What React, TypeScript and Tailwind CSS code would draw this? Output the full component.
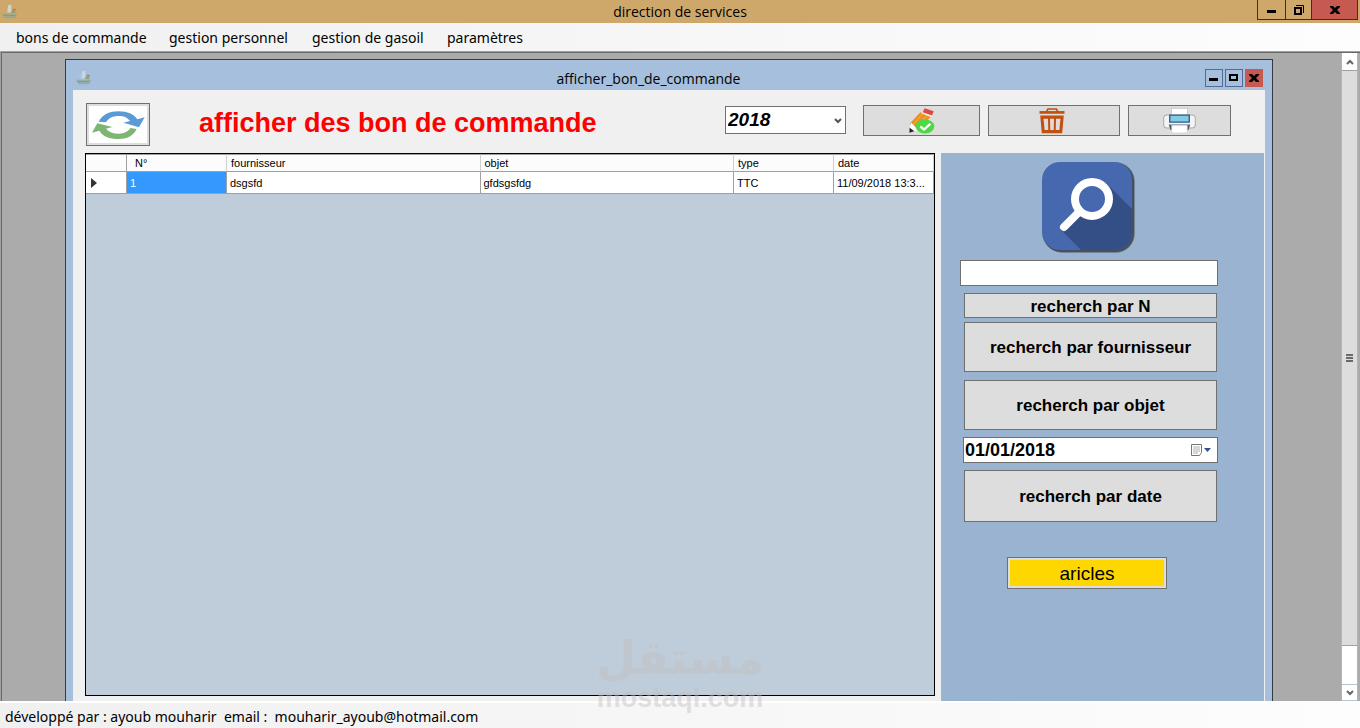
import type { ReactNode } from 'react';

const menuItems = [
  { label: 'bons de commande', width: 'w-[153px]' },
  { label: 'gestion personnel', width: 'w-[143px]' },
  { label: 'gestion de gasoil', width: 'w-[135px]' },
  { label: 'paramètres', width: 'w-[100px]' },
];

const headers = ['N°', 'fournisseur', 'objet', 'type', 'date'];

const rows = [
  { numero: '1', fournisseur: 'dsgsfd', objet: 'gfdsgsfdg', type: 'TTC', date: '11/09/2018 13:3...' },
];

const searchButton = 'ml-1 w-[253px] border border-[#707070] bg-[#dddddd] pt-0.5 text-[17px] leading-5 font-bold';

function BoatIcon() {
  return (
    <svg viewBox="0 0 48 44" className="h-[15px] w-4" aria-hidden="true">
      <path d="M0 29h46l-7 13H8z" fill="#8fa596" opacity="0.7" />
      <path d="M4 34h36" stroke="#5fa3c4" strokeWidth="3" />
      <path d="M18 3l10-2v24H16z" fill="#d3dbe2" opacity="0.8" />
      <path d="M32 14h9v5h-9z" fill="#cf6a4a" />
      <path d="M28 20h12v6H28z" fill="#7fa86a" />
    </svg>
  );
}

function RefreshIcon() {
  return (
    <svg viewBox="0 0 160 90" className="h-[30px] w-[54px]" aria-hidden="true">
      <path d="M22 35C34 12 56 4 82 4c26 0 46 8 56 24l22-6-17 30-47-14 20-5C108 22 96 18 82 18c-18 0-30 6-38 19z" fill="#5b9bd5" />
      <path d="M2 68l16-28 45 11-19 5c8 10 22 15 38 15s30-7 35-17l19 3c-10 21-30 30-54 30-28 0-48-8-58-25z" fill="#7db573" />
    </svg>
  );
}

function PencilIcon() {
  return (
    <svg viewBox="0 0 90 80" className="h-[27px] w-[30px]" aria-hidden="true">
      <path d="M40 15l32 13-38 42-26-20z" fill="#e8912b" />
      <path d="M47 20L18 54M60 25L28 62" stroke="#f5c518" strokeWidth="4" strokeDasharray="3 3" />
      <path d="M12 46l22 23L7 76z" fill="#fff" />
      <path d="M8 62l14 10-15 5z" fill="#222" />
      <path d="M47 12l29 12-3 6-30-12z" fill="#f0eeea" />
      <path d="M53 3l27 9-5 13-28-10z" fill="#d94a45" />
      <ellipse cx="54" cy="58" rx="28" ry="21" fill="#4cd944" />
      <path d="M40 58l11 9 19-17" fill="none" stroke="#fff" strokeWidth="7" />
    </svg>
  );
}

function TrashIcon() {
  return (
    <svg viewBox="0 0 76 80" className="mr-1 h-[27px] w-[26px]" aria-hidden="true">
      <path d="M22 14l4-8h25l4 8" fill="none" stroke="#c4500f" strokeWidth="5" />
      <path d="M1 12h74v8H1z" fill="#c4500f" />
      <path d="M8 30h60l-4 43H12z" fill="none" stroke="#c4500f" strokeWidth="9" />
      <path d="M29 30l1 43M47 30l-1 43" stroke="#c4500f" strokeWidth="6" />
    </svg>
  );
}

function PrinterIcon() {
  return (
    <svg viewBox="0 0 104 80" className="h-[27px] w-[35px]" aria-hidden="true">
      <path d="M28 4h48v22H28z" fill="#fff" stroke="#bbb" strokeWidth="2" />
      <rect x="5" y="24" width="94" height="38" rx="10" fill="#f4f4f4" stroke="#aaa" strokeWidth="3" />
      <path d="M20 52h64l-5 16H25z" fill="#53606a" />
      <path d="M29 54h46v23H29z" fill="#fff" stroke="#ccc" strokeWidth="2" />
      <path d="M23 24h58v21H23z" fill="#83cbe0" stroke="#2b5b94" strokeWidth="4" />
    </svg>
  );
}

function SearchLogo() {
  return (
    <svg viewBox="0 0 96 94" className="h-[94px] w-24" aria-hidden="true">
      <defs>
        <clipPath id="tile">
          <rect x="2" y="2" width="90" height="88" rx="18" />
        </clipPath>
      </defs>
      <rect x="4" y="2" width="91" height="91" rx="20" fill="#71849c" />
      <rect x="3" y="3" width="91" height="89" rx="18" fill="#47505e" />
      <g clipPath="url(#tile)">
        <path d="M0 0h96v94H0z" fill="#4668ae" />
        <path d="M66 23l40 40v40H54L21 70z" fill="#344f86" />
      </g>
      <circle cx="52" cy="39" r="17" fill="#4668ae" stroke="#fff" strokeWidth="8" />
      <path d="M38 53L24 67" stroke="#fff" strokeWidth="8" strokeLinecap="round" />
    </svg>
  );
}

function MinimizeGlyph() {
  return (
    <svg viewBox="0 0 12 12" className="size-3" aria-hidden="true">
      <path d="M1 6h9v3H1z" />
    </svg>
  );
}

function CloseGlyph() {
  return (
    <svg viewBox="0 0 12 12" className="size-3" aria-hidden="true">
      <path d="M1 2h3l2 2 2-2h3v1L8 6l3 3v1H8L6 8l-2 2H1V9l3-3-3-3z" />
    </svg>
  );
}

function ToolButton({ label, className, children }: { label: string; className: string; children: ReactNode }) {
  return (
    <button
      type="button"
      aria-label={ label }
      className={ `flex h-[31px] items-center justify-center border bg-[#dddddd] ${className}` }
    >
      { children }
    </button>
  );
}

function TitleBar() {
  return (
    <header className="grid h-[23px] shrink-0 grid-cols-[1fr_auto_1fr] bg-[#cea86a]">
      <div className="pt-1 pl-0.5">
        <BoatIcon />
      </div>
      <h1 className="pt-0.5 text-[14px] leading-5">direction de services</h1>
      <div className="flex h-5 justify-end pr-0.5">
        <button type="button" aria-label="Réduire" className="flex w-[29px] items-center justify-center border border-t-0 border-[#40301c]">
          <MinimizeGlyph />
        </button>
        <button type="button" aria-label="Restaurer" className="flex w-[25px] items-center justify-center border-b border-[#40301c]">
          <svg viewBox="0 0 12 12" className="size-3" aria-hidden="true">
            <path d="M2 4h6v6H2z" fill="none" stroke="#000" strokeWidth="2" />
            <path d="M3 1.500h7.500V9" fill="none" stroke="#000" />
          </svg>
        </button>
        <button type="button" aria-label="Fermer" className="flex w-[47px] items-center justify-center border border-t-0 border-[#40301c] bg-[#c75a50]">
          <CloseGlyph />
        </button>
      </div>
    </header>
  );
}

function ChildTitleBar() {
  return (
    <div className="flex h-[30px] shrink-0 px-0.5">
      <div className="pt-2.5 pl-2">
        <BoatIcon />
      </div>
      <h2 className="flex-1 pt-[9px] text-center text-[14px] leading-5">afficher_bon_de_commande</h2>
      <div className="flex gap-0.5 pt-[9px] pr-[7px]">
        <button type="button" aria-label="Réduire" className="flex size-[18px] items-center justify-center border border-[#536a94]">
          <MinimizeGlyph />
        </button>
        <button type="button" aria-label="Agrandir" className="flex size-[18px] items-center justify-center border border-[#536a94]">
          <svg viewBox="0 0 12 12" className="size-3" aria-hidden="true">
            <path d="M2 3h7v5H2z" fill="none" stroke="#000" strokeWidth="2" />
          </svg>
        </button>
        <button type="button" aria-label="Fermer" className="flex size-[18px] items-center justify-center bg-[#c75a50]">
          <CloseGlyph />
        </button>
      </div>
    </div>
  );
}

function Toolbar() {
  return (
    <div className="flex h-[63px] shrink-0 items-start pt-[15px] pr-[34px] pl-[13px]">
      <button
        type="button"
        aria-label="Actualiser"
        className="-mt-0.5 flex h-[43px] w-16 items-center justify-center border border-[#707070] bg-white ring-2 ring-[#dddddd] ring-inset"
      >
        <RefreshIcon />
      </button>
      <p className="ml-[49px] flex-1 text-[27px] leading-9 font-bold text-[#ff0000]">
        afficher des bon de commande
      </p>
      <div className="relative mr-[17px] mt-px">
        <select
          aria-label="Année"
          className="h-7 w-[121px] appearance-none border border-[#707070] bg-white pl-0.5 text-[19px] leading-6 font-bold italic"
        >
          <option>2018</option>
        </select>
        <svg viewBox="0 0 8 6" className="pointer-events-none absolute top-3 right-1 h-1.5 w-2" aria-hidden="true">
          <path d="M1 1l3 3 3-3" fill="none" stroke="#555" strokeWidth="2" />
        </svg>
      </div>
      <div className="flex gap-2">
        <ToolButton label="Modifier" className="w-[117px] border-[#707070]">
          <PencilIcon />
        </ToolButton>
        <ToolButton label="Supprimer" className="w-[132px] border-[#707070]">
          <TrashIcon />
        </ToolButton>
        <ToolButton label="Imprimer" className="w-[103px] border-[#707070]">
          <PrinterIcon />
        </ToolButton>
      </div>
    </div>
  );
}

function OrdersTable() {
  return (
    <div className="mb-[5px] ml-3 flex-1 border border-black bg-[#bfccd9] font-['Liberation_Sans',Arial,sans-serif] text-[11px] leading-4">
      <table className="w-full table-fixed border-separate border-spacing-0 text-left">
        <colgroup>
          <col className="w-[41px]" />
          <col className="w-[100px]" />
          <col />
          <col />
          <col className="w-[100px]" />
          <col className="w-[100px]" />
        </colgroup>
        <thead>
          <tr className="h-[18px] bg-[#fcfcfc]">
            <td className="border-t border-r border-b border-[#a0a0a0] p-0" />
            { headers.map((header, i) => (
              <th
                key={ header }
                scope="col"
                className={ `border-t border-r border-b border-t-[#a0a0a0] border-r-[#d0d0d0] border-b-[#a0a0a0] py-0 pr-0 font-normal ${i === 0 ? 'pl-2' : 'pl-1'}` }
              >
                { header }
              </th>
            )) }
          </tr>
        </thead>
        <tbody>
          { rows.map((row) => (
            <tr key={ row.numero } className="h-[22px] bg-white">
              <td className="border-r border-b border-[#a0a0a0] py-0 pr-0 pl-[5px]">
                <svg viewBox="0 0 6 10" className="h-2.5 w-1.5" aria-hidden="true">
                  <path d="M0 0l6 5-6 5z" fill="#333" />
                </svg>
              </td>
              <td className="border-r border-b border-[#a0a0a0] bg-[#3399ff] py-0 pr-0 pl-[3px] text-white">{ row.numero }</td>
              <td className="border-r border-b border-[#a0a0a0] py-0 pr-0 pl-[3px]">{ row.fournisseur }</td>
              <td className="border-r border-b border-[#a0a0a0] py-0 pr-0 pl-[3px]">{ row.objet }</td>
              <td className="border-r border-b border-[#a0a0a0] py-0 pr-0 pl-[3px]">{ row.type }</td>
              <td className="border-r border-b border-[#a0a0a0] py-0 pr-0 pl-[3px] whitespace-nowrap">{ row.date }</td>
            </tr>
          )) }
        </tbody>
      </table>
    </div>
  );
}

function SearchPanel() {
  return (
    <aside className="mr-px ml-1.5 flex w-[323px] shrink-0 flex-col items-start bg-[#99b3d1] pt-[7px] pl-[19px] font-['Liberation_Sans',Arial,sans-serif]">
      <div className="ml-20">
        <SearchLogo />
      </div>
      <input type="text" aria-label="Recherche" className="mt-1.5 h-[26px] w-[258px] border border-[#707070] bg-white px-1" />
      <button type="button" className={ `${searchButton} mt-[7px] h-[25px]` }>recherch par N</button>
      <button type="button" className={ `${searchButton} mt-1 h-[50px]` }>recherch par fournisseur</button>
      <button type="button" className={ `${searchButton} mt-2 h-[50px]` }>recherch par objet</button>
      <div className="mt-[7px] ml-[3px] flex h-[26px] w-[255px] items-center border border-[#707070] bg-white pr-1.5">
        <input
          type="text"
          aria-label="Date"
          defaultValue="01/01/2018"
          className="min-w-0 flex-1 pl-px text-[18px] leading-5 font-bold"
        />
        <button type="button" aria-label="Ouvrir le calendrier">
          <svg viewBox="0 0 20 12" className="h-3 w-5" aria-hidden="true">
            <path d="M.5.5h10v8l-2 3h-8z" fill="#fff" stroke="#777" />
            <path d="M2 3h7M2 5h7M2 7h7M2 9h5" stroke="#aab0b8" />
            <path d="M13 4h7l-3.500 4z" fill="#34508c" />
          </svg>
        </button>
      </div>
      <button type="button" className={ `${searchButton} mt-[7px] h-[52px]` }>recherch par date</button>
      <button
        type="button"
        className="mt-[35px] ml-[47px] h-8 w-40 border border-[#707070] bg-[#ffd700] pt-0.5 text-[19px] leading-6 ring-2 ring-[#dddddd] ring-inset"
      >
        aricles
      </button>
    </aside>
  );
}

function Scrollbar() {
  return (
    <div className="mr-0.5 flex w-[17px] shrink-0 flex-col border-x border-[#b4b4b4] bg-white">
      <div className="flex h-[17px] items-center justify-center">
        <svg viewBox="0 0 8 6" className="h-1.5 w-2" aria-hidden="true">
          <path d="M1 5l3-3 3 3" fill="none" stroke="#666" strokeWidth="2" />
        </svg>
      </div>
      <div className="flex flex-[576] flex-col items-center justify-center gap-px border-y border-[#a0a0a0] bg-[#dddddd]">
        <span className="h-0.5 w-[7px] bg-[#6a6a6a]" />
        <span className="h-0.5 w-[7px] bg-[#6a6a6a]" />
        <span className="h-0.5 w-[7px] bg-[#6a6a6a]" />
      </div>
      <div className="flex-[38]" />
      <div className="flex h-[17px] items-center justify-center border-y border-[#b8c2d0]">
        <svg viewBox="0 0 8 6" className="h-1.5 w-2" aria-hidden="true">
          <path d="M1 1l3 3 3-3" fill="none" stroke="#666" strokeWidth="2" />
        </svg>
      </div>
    </div>
  );
}

function Watermark() {
  return (
    <div className="pointer-events-none absolute inset-x-0 bottom-4 flex flex-col items-center font-bold text-[#c0c0c0]/45">
      <span lang="ar" dir="rtl" className="font-['DejaVu_Sans',sans-serif] text-[46px] leading-[52px]">مستقل</span>
      <span className="font-['Liberation_Sans',Arial,sans-serif] text-[27px] leading-7">mostaql.com</span>
    </div>
  );
}

export default function App() {
  return (
    <div className="relative flex h-screen flex-col overflow-hidden bg-[#f0f0f0] font-['Open_Sans','Noto_Sans',sans-serif] text-black">
      <TitleBar />
      <nav className="flex h-7 shrink-0 items-center bg-linear-to-r from-[#f0f0f0] to-[#fdfdfd] pt-0.5 pl-4 font-['Noto_Sans','Open_Sans',sans-serif] text-[14px] leading-5">
        { menuItems.map((item) => (
          <a key={ item.label } href="#" className={ item.width }>{ item.label }</a>
        )) }
      </nav>
      <main className="flex min-h-0 flex-1 border-t border-l border-[#a0a0a0]">
        <div className="flex min-w-0 flex-1 border-t border-l border-[#696969] bg-[#ababab]">
          <div className="mt-1.5 mr-[68px] ml-[63px] flex min-w-0 flex-1 flex-col border border-b-0 border-[#343a42] bg-[#a6bfdc]">
            <ChildTitleBar />
            <div className="mr-[7px] ml-[7px] flex min-h-0 flex-1 flex-col bg-[#f0f0f0] font-['Liberation_Sans',Arial,sans-serif]">
              <Toolbar />
              <div className="flex min-h-0 flex-1">
                <OrdersTable />
                <SearchPanel />
              </div>
            </div>
          </div>
          <Scrollbar />
        </div>
      </main>
      <footer className="h-[27px] shrink-0 border-t-2 border-white bg-linear-to-r from-[#f0f0f0] to-[#fdfdfd] pt-1 pl-[5px] font-['Noto_Sans','Open_Sans',sans-serif] text-[14px] leading-5 whitespace-pre">
        développé par : ayoub mouharir  email :  mouharir_ayoub@hotmail.com
      </footer>
      <Watermark />
    </div>
  );
}
